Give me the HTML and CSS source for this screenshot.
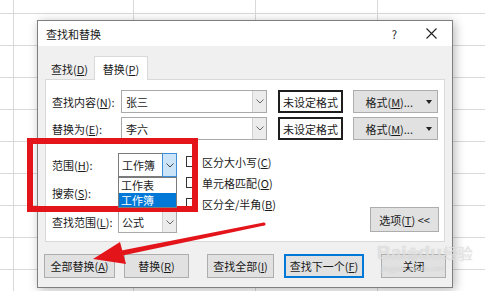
FILE: index.html
```html
<!DOCTYPE html>
<html lang="zh-CN">
<head>
<meta charset="utf-8">
<link rel="stylesheet" href="styles.css">
</head>
<body>
<div class="sheet">
  <div class="dialog">
    <div class="titlebar">
      <span class="title">查找和替换</span>
      <span class="help">?</span>
      <svg class="closex" width="11" height="11" viewBox="0 0 11 11"><path d="M0.5 0.5 L10.5 10.5 M10.5 0.5 L0.5 10.5" stroke="#222" stroke-width="1.1" fill="none"/></svg>
    </div>
    <div class="tabs">
      <div class="tab">查找(<u>D</u>)</div>
      <div class="tab active">替换(<u>P</u>)</div>
    </div>
    <div class="panel">
      <div class="row">
        <span class="lbl">查找内容(<u>N</u>):</span>
        <div class="combo"><span class="val">张三</span><span class="carr"><svg width="8" height="5" viewBox="0 0 8 5"><path d="M0.5 0.5 L4 4 L7.5 0.5" stroke="#666" fill="none"/></svg></span></div>
        <div class="fmtbox">未设定格式</div>
        <div class="btn fmtbtn"><span>格式(<u>M</u>)...</span><span class="tri"></span></div>
      </div>
      <div class="row row2">
        <span class="lbl">替换为(<u>E</u>):</span>
        <div class="combo"><span class="val">李六</span><span class="carr"><svg width="8" height="5" viewBox="0 0 8 5"><path d="M0.5 0.5 L4 4 L7.5 0.5" stroke="#666" fill="none"/></svg></span></div>
        <div class="fmtbox">未设定格式</div>
        <div class="btn fmtbtn"><span>格式(<u>M</u>)...</span><span class="tri"></span></div>
      </div>
      <div class="lower">
        <div class="opts">
          <div class="orow o1"><span class="lbl2">范围(<u>H</u>):</span><div class="sel focus"><span class="sval">工作簿</span><span class="sarr"><svg width="8" height="5" viewBox="0 0 8 5"><path d="M0.5 0.5 L4 4 L7.5 0.5" stroke="#444" fill="none"/></svg></span></div></div>
          <div class="orow o2"><span class="lbl2">搜索(<u>S</u>):</span><div class="sel"><span class="sval"></span><span class="sarr"></span></div></div>
          <div class="orow o3"><span class="lbl2">查找范围(<u>L</u>):</span><div class="sel"><span class="sval">公式</span><span class="sarr"><svg width="8" height="5" viewBox="0 0 8 5"><path d="M0.5 0.5 L4 4 L7.5 0.5" stroke="#666" fill="none"/></svg></span></div></div>
          <div class="droplist">
            <div class="ditem">工作表</div>
            <div class="ditem sel-item">工作簿</div>
          </div>
        </div>
        <div class="checks">
          <div class="chk"><span class="box"></span>区分大小写(<u>C</u>)</div>
          <div class="chk"><span class="box"></span>单元格匹配(<u>O</u>)</div>
          <div class="chk"><span class="box"></span>区分全/半角(<u>B</u>)</div>
        </div>
        <div class="btn optbtn">选项(<u>T</u>) &lt;&lt;</div>
      </div>
    </div>
    <div class="buttons">
      <div class="btn b1">全部替换(<u>A</u>)</div>
      <div class="btn b2">替换(<u>R</u>)</div>
      <div class="btn b3">查找全部(<u>I</u>)</div>
      <div class="btn b4 default">查找下一个(<u>F</u>)</div>
      <div class="btn b5">关闭</div>
    </div>
  </div>
  <svg class="annot" width="485" height="291" viewBox="0 0 485 291">
    <rect x="30" y="141" width="165" height="68" fill="none" stroke="#e3151b" stroke-width="6"/>
    <polygon points="121.5,250.5 263.7,222.5 264.3,225.5 122.5,255.5" fill="#e3151b"/>
    <circle cx="264" cy="224" r="1.6" fill="#e3151b"/>
    <polygon points="93,259 120,242 126,264" fill="#e3151b"/>
  </svg>
  <div class="wm"><span class="wm1">Bai<span class="paw">❀</span>du</span><span class="wm2">经验</span><div class="wm3">jingyan.baidu.com</div></div>
</div>
</body>
</html>
```

FILE: styles.css
```css
* { box-sizing: border-box; }
html, body { margin: 0; padding: 0; }
body {
  width: 485px;
  height: 291px;
  overflow: hidden;
  font-family: "Noto Sans CJK SC", "Microsoft YaHei", sans-serif;
  font-size: 11px;
  color: #1a1a1a;
}
u { text-decoration: underline; text-underline-offset: 1px; }

.sheet {
  position: relative;
  width: 485px;
  height: 291px;
  background:
    linear-gradient(#d9d9d9, #d9d9d9) 13px 0 / 1px 100% no-repeat,
    linear-gradient(#d9d9d9, #d9d9d9) 133px 0 / 1px 100% no-repeat,
    linear-gradient(#d9d9d9, #d9d9d9) 255px 0 / 1px 100% no-repeat,
    linear-gradient(#d9d9d9, #d9d9d9) 377px 0 / 1px 100% no-repeat,
    repeating-linear-gradient(to bottom, transparent 0 13px, #d9d9d9 13px 14px, transparent 14px 32px),
    #ffffff;
}

.dialog {
  position: absolute;
  left: 37px;
  top: 20px;
  width: 416px;
  height: 268px;
  background: #f0f0f0;
  border: 1px solid #7f7f7f;
  box-shadow: 2px 2px 10px rgba(0,0,0,0.28);
  display: flex;
  flex-direction: column;
}

.titlebar {
  height: 25px;
  background: #ffffff;
  display: flex;
  align-items: center;
  padding-left: 8px;
  flex: none;
}
.title { font-size: 11px; }
.help { margin-left: auto; margin-right: 29px; font-size: 11px; }
.closex { margin-right: 15px; }

.tabs {
  height: 34px;
  display: flex;
  align-items: flex-end;
  padding-left: 7px;
  flex: none;
  position: relative;
  z-index: 2;
  margin-bottom: -1px;
}
.tab {
  height: 22px;
  width: 49px;
  display: flex;
  align-items: center;
  justify-content: center;
  font-size: 11px;
  padding-bottom: 1px;
}
.tab.active {
  height: 24px;
  width: 54px;
  background: #ffffff;
  border: 1px solid #d9d9d9;
  border-bottom: none;
  padding-bottom: 0;
}

.panel {
  margin: 0 7px;
  height: 163px;
  background: #ffffff;
  border: 1px solid #d9d9d9;
  padding: 10px 6px 0 6px;
  flex: none;
}

.row { display: flex; align-items: center; height: 23px; }
.row2 { margin-top: 4px; }
.lbl { width: 69px; flex: none; white-space: nowrap; }
.combo {
  width: 146px;
  height: 100%;
  border: 1px solid #a9a9a9;
  display: flex;
  align-items: stretch;
  flex: none;
}
.val { flex: 1; padding-left: 4px; display: flex; align-items: center; }
.carr {
  width: 14px;
  background: #ececec;
  border-left: 1px solid #d0d0d0;
  display: flex;
  align-items: center;
  justify-content: center;
}
.fmtbox {
  margin-left: 11px;
  width: 65px;
  height: 100%;
  border: 2px solid #1e1e1e;
  display: flex;
  align-items: center;
  justify-content: center;
  flex: none;
}
.btn {
  background: #e1e1e1;
  border: 1px solid #adadad;
  display: flex;
  align-items: center;
  justify-content: center;
  white-space: nowrap;
  flex: none;
}
.fmtbtn {
  margin-left: 10px;
  width: 85px;
  height: 100%;
  justify-content: flex-end;
  padding-right: 5px;
}
.fmtbtn .tri {
  margin-left: 13px;
  width: 0;
  height: 0;
  border-left: 3.5px solid transparent;
  border-right: 3.5px solid transparent;
  border-top: 4px solid #222;
}

.lower {
  margin-top: 13px;
  display: flex;
  align-items: flex-start;
  height: 80px;
}
.opts { position: relative; width: 125px; flex: none; }
.orow { display: flex; align-items: center; height: 22px; }
.orow.o1 { height: 24px; }
.orow.o2 { margin-top: 5px; }
.orow.o3 { margin-top: 7px; }
.lbl2 { width: 66px; flex: none; white-space: nowrap; }
.sel {
  width: 59px;
  height: 100%;
  border: 1px solid #a9a9a9;
  display: flex;
  align-items: stretch;
  background: #fff;
}
.sval { flex: 1; padding-left: 3px; display: flex; align-items: center; font-size: 11px; }
.sarr {
  width: 14px;
  background: #ececec;
  border-left: 1px solid #d0d0d0;
  display: flex;
  align-items: center;
  justify-content: center;
}
.sel.focus { border-color: #7a7a7a; }
.sel.focus .sarr {
  background: #cce4f7;
  border: 1px solid #3d8fd9;
  margin: -1px -1px -1px 0;
  width: 15px;
}
.droplist {
  position: absolute;
  left: 66px;
  top: 24px;
  width: 59px;
  height: 31px;
  background: #fff;
  border: 1px solid #7a7a7a;
  z-index: 3;
}
.ditem { height: 14.5px; line-height: 14px; padding-left: 2px; font-size: 11px; }
.sel-item { background: #0078d7; color: #fff; }

.checks { margin-left: 9px; margin-top: -2px; }
.chk { display: flex; align-items: center; height: 21px; white-space: nowrap; }
.box {
  width: 11px;
  height: 11px;
  border: 1px solid #333;
  background: #fff;
  margin-right: 5px;
  flex: none;
}
.optbtn {
  margin-left: auto;
  margin-right: -1px;
  margin-top: 54px;
  width: 69px;
  height: 25px;
}

.buttons {
  display: flex;
  margin-top: 12px;
  padding-left: 6px;
  height: 24px;
  flex: none;
}
.buttons .btn { height: 24px; }
.b1 { width: 71px; }
.b2 { width: 65px; margin-left: 9px; }
.b3 { width: 67px; margin-left: 18px; }
.b4 { width: 80px; margin-left: 10px; }
.b5 { width: 65px; margin-left: 17px; }
.default { border: 2px solid #0078d7; }

.annot { position: absolute; left: 0; top: 0; pointer-events: none; }

.wm {
  position: absolute;
  left: 377px;
  top: 243px;
  color: rgba(235,235,235,0.7);
  text-shadow: 0 0 1px rgba(160,160,160,0.5);
  font-family: "Liberation Sans", Arial, sans-serif;
  pointer-events: none;
  white-space: nowrap;
  line-height: 1;
}
.wm1 { font-size: 19px; font-weight: bold; }
.paw { font-size: 12px; }
.wm2 { font-family: "Noto Sans CJK SC", sans-serif; font-size: 15px; margin-left: 1px; }
.wm3 { font-size: 7px; margin-top: 3px; margin-left: 4px; letter-spacing: 0.5px; }
```
